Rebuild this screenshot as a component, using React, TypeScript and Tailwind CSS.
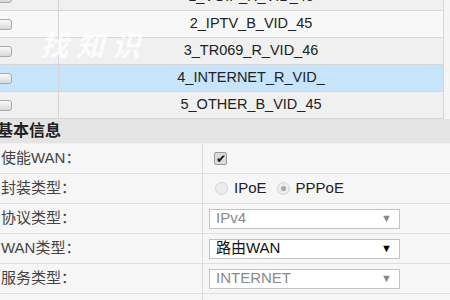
const vlans = [
  { name: '1_VOIP_R_VID_45', bg: 'bg-[#f0f0f0]' },
  { name: '2_IPTV_B_VID_45', bg: 'bg-[#f8f8f8]' },
  { name: '3_TR069_R_VID_46', bg: 'bg-[#f0f0f0]' },
  { name: '4_INTERNET_R_VID_', bg: 'bg-[#c6e5fb]' },
  { name: '5_OTHER_B_VID_45', bg: 'bg-[#f0f0f0]' },
];

function Select({ value, disabled }: { value: React.ReactNode; disabled?: boolean }) {
  return (
    <div className="flex h-[20px] w-[191px] items-center justify-between border border-[#c4c4c4] bg-white pl-[6px] pr-[7px]">
      <span className={disabled ? 'text-[15px] text-[#8a8a8a]' : 'text-[15px] text-[#111]'}>{value}</span>
      <span className={disabled ? 'text-[11px] text-[#8a8a8a]' : 'text-[11px] text-black'}>▼</span>
    </div>
  );
}

function Radio({ checked }: { checked?: boolean }) {
  return (
    <span className="flex h-[13px] w-[13px] items-center justify-center rounded-full border border-[#d4d4d4] bg-[#ececec]">
      {checked ? <span className="h-[5px] w-[5px] rounded-full bg-[#a8a8a8]" /> : null}
    </span>
  );
}

function FormRow({ label, pad = 'pl-[6px]', children }: { label: React.ReactNode; pad?: string; children: React.ReactNode }) {
  return (
    <div className="flex h-[30px] border-b border-[#dedede] bg-[#f6f6f6]">
      <div className="flex w-[203px] shrink-0 items-center border-r border-[#dcdcdc] pl-[1px] text-[15px] text-[#444]">
        {label}
      </div>
      <div className={`flex items-center ${pad}`}>{children}</div>
    </div>
  );
}

export default function App() {
  return (
    <div className="relative h-[300px] w-[450px] overflow-hidden bg-[#f5f5f5] font-['Liberation_Sans','Noto_Sans_CJK_SC',sans-serif]">
      <div className="-mt-[16px] w-[444px] border-r border-[#d6d6d6]">
        {vlans.map((v) => (
          <div key={v.name} className={`flex h-[27px] border-b border-[#d6d6d6] ${v.bg}`}>
            <div className="flex w-[59px] shrink-0 items-center border-r border-[#d6d6d6]">
              <span className="-ml-[9px] h-[11px] w-[21px] rounded-[3px] border border-[#a9a9a9] bg-gradient-to-b from-[#fafafa] to-[#d9d9d9]" />
            </div>
            <div className="flex flex-1 items-center justify-center text-[14.5px] text-[#222]">{v.name}</div>
          </div>
        ))}
      </div>

      <div className="flex h-[25px] items-center border-b border-[#f0f0f0] bg-[#e4e4e4] text-[16px] font-bold text-[#222]">
        <span className="-ml-[3px]">基本信息</span>
      </div>

      <FormRow label="使能WAN：" pad="pl-[11px]">
        <span className="flex h-[13px] w-[13px] items-center justify-center rounded-[2px] border border-[#9a9a9a] bg-[#dcdcdc] text-[12px] leading-none text-[#111]">
          ✔
        </span>
      </FormRow>
      <FormRow label="封装类型：" pad="pl-[12px]">
        <div className="flex items-center text-[15px] text-[#222]">
          <Radio />
          <span className="ml-[6px]">IPoE</span>
          <span className="ml-[10px]">
            <Radio checked />
          </span>
          <span className="ml-[6px]">PPPoE</span>
        </div>
      </FormRow>
      <FormRow label="协议类型：">
        <Select value="IPv4" disabled />
      </FormRow>
      <FormRow label="WAN类型：">
        <Select value="路由WAN" />
      </FormRow>
      <FormRow label="服务类型：">
        <Select value="INTERNET" disabled />
      </FormRow>
      <FormRow label="">
        <span />
      </FormRow>

      <div className="pointer-events-none absolute left-[40px] top-[23px] select-none text-[28px] font-bold italic tracking-[8px] text-white/80 font-['Noto_Sans_CJK_SC',sans-serif]">
        找知识
      </div>
    </div>
  );
}
